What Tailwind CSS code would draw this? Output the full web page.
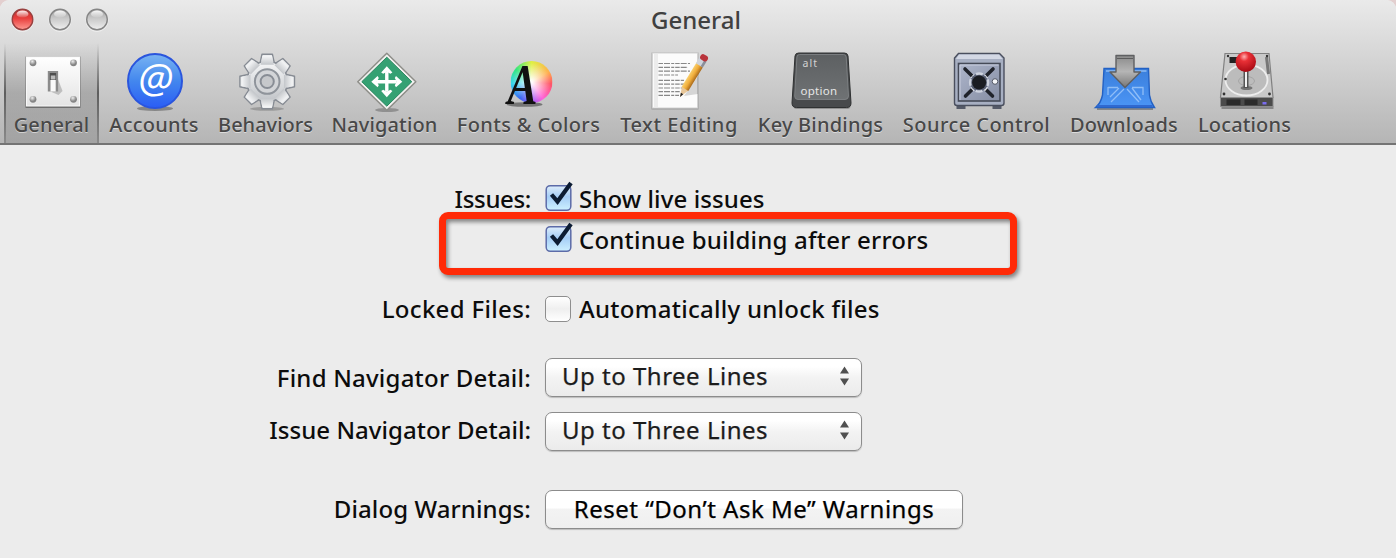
<!DOCTYPE html>
<html lang="en">
<head>
<meta charset="utf-8">
<title>General</title>
<script src="https://cdn.jsdelivr.net/npm/@tailwindcss/browser@4"></script>
</head>
<body class="bg-[#e3cfcf] font-['Noto_Sans',sans-serif] overflow-hidden">
<div class="w-[1396px] h-[558px] bg-[#ececec] rounded-t-[9px] overflow-hidden flex flex-col">
  <header class="h-[145px] shrink-0 flex flex-col bg-linear-to-b from-[#eaeaea] via-[#d0d0d0] to-[#b5b5b5] border-b-2 border-[#747474] rounded-t-[9px]">
    <!-- title bar -->
    <div class="h-[43px] shrink-0 grid grid-cols-[1fr_auto_1fr] items-start">
      <svg class="mt-[7px] ml-[10px]" width="100" height="26" viewBox="10 7 100 26">
        <defs>
          <linearGradient id="red" x1="0" y1="0" x2="0" y2="1"><stop offset="0" stop-color="#c02c2c"/><stop offset=".45" stop-color="#e8403e"/><stop offset="1" stop-color="#ff9c94"/></linearGradient>
          <linearGradient id="gry" x1="0" y1="0" x2="0" y2="1"><stop offset="0" stop-color="#a2a2a2"/><stop offset=".45" stop-color="#c9c9c9"/><stop offset="1" stop-color="#f0f0f0"/></linearGradient>
          <linearGradient id="gloss" x1="0" y1="0" x2="0" y2="1"><stop offset="0" stop-color="#fff" stop-opacity=".95"/><stop offset="1" stop-color="#fff" stop-opacity=".1"/></linearGradient>
        </defs>
        <circle cx="22.5" cy="20.5" r="11" fill="none" stroke="#fff" stroke-opacity=".5"/>
        <circle cx="60" cy="20.5" r="11" fill="none" stroke="#fff" stroke-opacity=".5"/>
        <circle cx="97" cy="20.5" r="11" fill="none" stroke="#fff" stroke-opacity=".5"/>
        <circle cx="22.5" cy="19.5" r="10.3" fill="url(#red)" stroke="#98403f" stroke-width="1.4"/>
        <circle cx="60" cy="19.5" r="10.3" fill="url(#gry)" stroke="#858585" stroke-width="1.4"/>
        <circle cx="97" cy="19.5" r="10.3" fill="url(#gry)" stroke="#858585" stroke-width="1.4"/>
        <ellipse cx="22.5" cy="14" rx="6" ry="3.6" fill="url(#gloss)"/>
        <ellipse cx="60" cy="14" rx="6" ry="3.6" fill="url(#gloss)"/>
        <ellipse cx="97" cy="14" rx="6" ry="3.6" fill="url(#gloss)"/>
      </svg>
      <h1 class="text-[24px] leading-[32px] mt-[4px] mr-[4px] text-[#404040] font-medium">General</h1>
      <span></span>
    </div>
    <!-- toolbar -->
    <nav class="flex h-[100px] pl-1 text-[20px] leading-[24px] font-medium text-[#484848] [text-shadow:0_1px_0_rgba(255,255,255,.5)] [&>div]:flex [&>div]:flex-col [&>div]:items-center [&>div]:pt-[7px] [&>div]:shrink-0 [&_span]:whitespace-nowrap [&_svg]:shrink-0 [&_span]:-mt-px">
      <div class="w-[95px] bg-linear-to-b from-black/0 via-black/15 to-black/10 relative">
        <i class="absolute left-0 inset-y-0 w-[2px] bg-linear-to-b from-black/0 via-black/45 to-black/15"></i>
        <i class="absolute right-0 inset-y-0 w-[2px] bg-linear-to-b from-black/0 via-black/45 to-black/15"></i>
        <svg width="64" height="64" viewBox="19.5 50 64 64">
          <defs><linearGradient id="plate" x1="0" y1="0" x2="0" y2="1"><stop offset="0" stop-color="#fff"/><stop offset="1" stop-color="#e4e4e4"/></linearGradient>
          <radialGradient id="screw" cx=".4" cy=".3"><stop offset="0" stop-color="#eee"/><stop offset="1" stop-color="#858585"/></radialGradient></defs>
          <rect x="25" y="56.5" width="55" height="51.5" fill="#000" fill-opacity=".35"/>
          <rect x="26" y="57" width="53" height="49" fill="url(#plate)" stroke="#f8f8f8"/>
          <g fill="url(#screw)"><circle cx="32.5" cy="62.8" r="3.4"/><circle cx="73" cy="62.8" r="3.4"/><circle cx="32.5" cy="99.3" r="3.4"/><circle cx="73" cy="99.3" r="3.4"/></g>
          <path d="M57 78l5 13-4 4-7-3z" fill="#999" fill-opacity=".55"/>
          <rect x="47.3" y="71" width="10.3" height="20.5" fill="#8b8b8b"/>
          <rect x="49.3" y="73" width="6.3" height="7" fill="#4e4e4e"/>
          <rect x="50.3" y="75.5" width="4.6" height="4" fill="#bbb"/>
          <rect x="50" y="80" width="5.2" height="11.5" fill="#fafafa"/>
        </svg>
        <span class="tracking-[0.1px]">General</span>
      </div>
      <div class="w-[110px]">
        <svg width="64" height="64" viewBox="122 50 64 64">
          <defs><linearGradient id="acc" x1="0" y1="0" x2="0" y2="1"><stop offset="0" stop-color="#79b4f2"/><stop offset=".5" stop-color="#4387ee"/><stop offset="1" stop-color="#2a5df5"/></linearGradient></defs>
          <ellipse cx="155" cy="108.5" rx="18" ry="2.5" fill="#000" fill-opacity=".3"/>
          <circle cx="155" cy="81" r="27" fill="url(#acc)" stroke="#2a55dd" stroke-width="2"/>
          <text x="155.5" y="93" text-anchor="middle" font-family="Open Sans" font-weight="400" font-size="41" fill="#fff" font-style="italic" style="text-shadow:none">@</text>
        </svg>
        <span class="tracking-[0.25px]">Accounts</span>
      </div>
      <div class="w-[113px]">
        <svg width="64" height="64" viewBox="233.5 50 64 64">
          <defs><linearGradient id="gear" x1="0" y1="0" x2="0" y2="1"><stop offset="0" stop-color="#f4f5f6"/><stop offset="1" stop-color="#c3c6ca"/></linearGradient>
          <path id="tooth" d="M-7.2-18L-5.2-27.3H5.2L7.2-18z"/></defs>
          <ellipse cx="266.5" cy="108.8" rx="17" ry="2" fill="#000" fill-opacity=".2"/>
          <g transform="translate(266.7 81.5)" stroke="#868b93" stroke-width="1.4" stroke-linejoin="round">
            <g fill="url(#gear)"><use href="#tooth"/><use href="#tooth" transform="rotate(45)"/><use href="#tooth" transform="rotate(90)"/><use href="#tooth" transform="rotate(135)"/><use href="#tooth" transform="rotate(180)"/><use href="#tooth" transform="rotate(225)"/><use href="#tooth" transform="rotate(270)"/><use href="#tooth" transform="rotate(315)"/></g>
            <circle r="20.3" fill="url(#gear)"/>
            <circle r="18.6" fill="url(#gear)" stroke="none"/>
            <g fill="url(#gear)" stroke="none" transform="scale(.93)"><use href="#tooth"/><use href="#tooth" transform="rotate(90)"/><use href="#tooth" transform="rotate(180)"/><use href="#tooth" transform="rotate(270)"/><use href="#tooth" transform="rotate(45)"/><use href="#tooth" transform="rotate(135)"/><use href="#tooth" transform="rotate(225)"/><use href="#tooth" transform="rotate(315)"/></g>
            <circle r="12.3" fill="#d3d5d8" stroke-width="2" stroke="#8f949b"/>
            <circle r="6.6" fill="#c6c8cb" stroke="#888d95" stroke-width="2"/>
          </g>
        </svg>
        <span>Behaviors</span>
      </div>
      <div class="w-[125px]">
        <svg width="64" height="64" viewBox="352.5 50 64 64">
          <ellipse cx="386.5" cy="110" rx="12" ry="2" fill="#000" fill-opacity=".25"/>
          <g transform="translate(386.3 81.7)">
            <path d="M0-28.5L29 0 0 28.5-29 0z" fill="#f3f3f1" stroke="#8d8d88" stroke-width="1.5" stroke-linejoin="round"/>
            <path d="M0-24.5L25 0 0 24.5-25 0z" fill="#35a173" stroke="#2b8961"/>
            <g fill="#fff"><path d="M-1.7-10h3.4v20h-3.4zM-10-1.7h20v3.4h-20z"/><path id="ah" d="M0-15.5L5.6-9.2 3.6-8 0-10-3.6-8-5.6-9.2z"/><use href="#ah" transform="rotate(90)"/><use href="#ah" transform="rotate(180)"/><use href="#ah" transform="rotate(270)"/></g>
          </g>
        </svg>
        <span class="tracking-[0.15px]">Navigation</span>
      </div>
      <div class="w-[163px]">
        <svg width="64" height="64" viewBox="496.5 50 64 64">
          <ellipse cx="524" cy="104.5" rx="18" ry="2.3" fill="#000" fill-opacity=".4"/>
          <foreignObject x="509.5" y="60.5" width="43" height="43"><div class="size-[42px] rounded-full bg-[radial-gradient(circle,#fff_2%,rgba(255,255,255,.4)_40%,transparent_65%),conic-gradient(#dff043,#ffb04e_60deg,#ff5566_95deg,#ff63d8_145deg,#9b62ff_180deg,#3a68f0_215deg,#35d6f0_265deg,#35e67c_310deg,#dff043)]"></div></foreignObject>
          <text x="507" y="103.5" font-family="Liberation Serif" font-weight="bold" font-style="italic" font-size="56" fill="#111" textLength="30" lengthAdjust="spacingAndGlyphs" style="text-shadow:none">A</text>
        </svg>
        <span class="tracking-[0.35px]">Fonts &amp; Colors</span>
      </div>
      <div class="w-[138px]">
        <svg width="64" height="64" viewBox="647 50 64 64">
          <defs><linearGradient id="pen" x1="0" y1="0" x2="1" y2="0"><stop offset="0" stop-color="#f9cf6c"/><stop offset=".5" stop-color="#f0ac3a"/><stop offset="1" stop-color="#a8691b"/></linearGradient></defs>
          <rect x="651.5" y="52.5" width="47" height="57" fill="#000" fill-opacity=".2"/>
          <rect x="652.5" y="53" width="45" height="55" fill="#fbfbfb" stroke="#d2d2d2"/>
          <path d="M656 54v53" stroke="#ececec" stroke-width="4"/>
          <g stroke="#888" stroke-width="1.2" stroke-dasharray="4.5 1 6 1.2 3 1"><path d="M658.5 63.5H690M658.5 67.3H688M658.5 71.2H690M658.5 75H678M658.5 80.3H684M658.5 84.2H690M658.5 88H683M658.5 91.7H680M658.5 95.3H679"/></g>
          <path d="M684 96l14-20v18z" fill="#000" fill-opacity=".15"/>
          <g transform="translate(680 97) rotate(31.5)">
            <path d="M0 0L-3.8-10H3.8z" fill="#e8c79a"/><path d="M0 0L-1.4-4H1.4z" fill="#222"/>
            <rect x="-3.9" y="-38" width="7.8" height="28.5" fill="url(#pen)"/>
            <rect x="-4.1" y="-44" width="8.2" height="7" fill="#d0d4dc"/><rect x="1.5" y="-44" width="2.6" height="7" fill="#8a8f9a"/>
            <rect x="-4.1" y="-49" width="8.2" height="6" rx="3" fill="#b9343c"/>
          </g>
        </svg>
        <span class="tracking-[0.5px]">Text Editing</span>
      </div>
      <div class="w-[145px]">
        <svg width="64" height="64" viewBox="788.5 50 64 64">
          <defs><linearGradient id="key" x1="0" y1="0" x2="0" y2="1"><stop offset="0" stop-color="#5d6062"/><stop offset="1" stop-color="#6f7274"/></linearGradient></defs>
          <rect x="793" y="102" width="57" height="7" rx="3" fill="#000" fill-opacity=".25"/>
          <path d="M798 53H844Q847 53 847.5 56L850.5 103Q850.5 107.5 846 107.5H796Q791.5 107.5 791.5 103L794.5 56Q795 53 798 53z" fill="#484a4c" stroke="#2f3132"/>
          <path d="M799 54.5H843Q845.5 54.5 845.7 57L848 96Q848 99.5 844.5 99.5H797.5Q794 99.5 794.2 96L796.4 57Q796.6 54.5 799 54.5z" fill="url(#key)" stroke="#7f8284" stroke-width=".9"/>
          <text x="802" y="67" font-family="Noto Sans" font-weight="400" font-size="10.5" fill="#d2d2d2" textLength="14.5" style="text-shadow:none">alt</text>
          <text x="800" y="94.5" font-family="Noto Sans" font-weight="400" font-size="11.5" fill="#e6e6e6" textLength="36.5" style="text-shadow:none">option</text>
        </svg>
        <span class="tracking-[0.2px]">Key Bindings</span>
      </div>
      <div class="w-[167px]">
        <svg width="64" height="64" viewBox="944.5 50 64 64">
          <defs><linearGradient id="safe" x1="0" y1="0" x2="1" y2="1"><stop offset="0" stop-color="#aeb6cb"/><stop offset="1" stop-color="#858da3"/></linearGradient></defs>
          <path d="M956 104h9v5h-9zM992 104h9v5h-9z" fill="#555a68"/>
          <path d="M958 53.5H999L1003.5 58V103Q1003.5 105.5 1001 105.5H956.5Q954 105.5 954 103V58z" fill="#a7afc2" stroke="#4a4f5e" stroke-width="1.4"/>
          <path d="M958.5 54.5H998.5L1002 59H955.5z" fill="#d3d8e4"/>
          <rect x="958" y="63.5" width="41.5" height="37.5" fill="url(#safe)" stroke="#454a57" stroke-width="1.6"/>
          <path d="M959.5 100V65H998" fill="none" stroke="#c9cede" stroke-width="1"/>
          <path d="M964.5 69L992 96M992.5 69L965 96" stroke="#20232b" stroke-width="3.6" stroke-linecap="round"/>
          <path d="M971.5 76L986 89.500M986 76L971.500 89.500" stroke="#e0e3ea" stroke-width="4.500"/>
          <circle cx="978.6" cy="82.5" r="9" fill="#596075" stroke="#cdd2de" stroke-width="2.4" stroke-dasharray="7 7.137" stroke-dashoffset="3.5"/>
          <circle cx="978.6" cy="82.5" r="7" fill="#1b1d23"/>
          <circle cx="994.5" cy="81.5" r="2.8" fill="#f4f5f8" stroke="#555a68"/>
        </svg>
        <span class="tracking-[0.45px]">Source Control</span>
      </div>
      <div class="w-[128px]">
        <svg width="64" height="64" viewBox="1092 50 64 64">
          <defs><linearGradient id="bp" x1="0" y1="0" x2="0" y2="1"><stop offset="0" stop-color="#3b7fdc"/><stop offset="1" stop-color="#4b95f5"/></linearGradient>
          <linearGradient id="arr" x1="0" y1="0" x2="0" y2="1"><stop offset="0" stop-color="#8a8a8a"/><stop offset=".5" stop-color="#b5b5b5"/><stop offset="1" stop-color="#777"/></linearGradient></defs>
          <path d="M1097 109H1153" stroke="#000" stroke-opacity=".3" stroke-width="2"/>
          <path d="M1104 68.5H1148.5L1149.5 95Q1150.5 102 1154.5 107.5H1095.5Q1101 103 1102.5 95z" fill="url(#bp)" stroke="#2361c4" stroke-width="1.4"/>
          <path d="M1106 71H1146.5M1108 87.500H1118M1132 87.500H1143V95M1108 87V95M1124 89L1111 102M1127 89L1139 102M1119 88L1110 97M1132 88L1141 100" fill="none" stroke="#a8cdfb" stroke-width="1.3" stroke-opacity=".75"/>
          <path d="M1097 106H1152.5" stroke="#3069cf" stroke-width="2"/>
          <path d="M1116 55.5H1134V72H1140.5L1125 87.5 1110 72H1116z" fill="url(#arr)" stroke="#5f6062" stroke-width="1.4" stroke-linejoin="round"/>
          <path d="M1117 58.5H1133" stroke="#5c5c5c"/>
        </svg>
        <span class="tracking-[0.2px]">Downloads</span>
      </div>
      <div class="w-[113px]">
        <svg width="64" height="64" viewBox="1212.5 50 64 64">
          <defs><radialGradient id="ball" cx=".42" cy=".25" r=".75"><stop offset="0" stop-color="#ffb0b0"/><stop offset=".3" stop-color="#e93036"/><stop offset="1" stop-color="#a80a14"/></radialGradient></defs>
          <path d="M1221 106H1273V109H1221z" fill="#000" fill-opacity=".3"/>
          <path d="M1224.5 53.5H1268.5L1272.5 97.5H1220z" fill="#c9c9c9" stroke="#818181" stroke-width="1.2"/>
          <path d="M1220 97.5H1272.5V106.5H1220z" fill="#4b4b4b" stroke="#8d8d8d"/>
          <path d="M1226 99.5H1240V105H1226zM1244 99.5H1257V105H1244z" fill="#2b2b2b"/><path d="M1262 102h4v2.5h-4z" fill="#7a6cf0"/>
          <ellipse cx="1246" cy="80" rx="21" ry="15.5" fill="#bcbcbc" stroke="#ededed" stroke-width="1.8"/>
          <ellipse cx="1246" cy="81" rx="8" ry="4.5" fill="none" stroke="#a5a5a5"/>
          <rect x="1229" y="57" width="9" height="6" fill="#222"/><path d="M1266 57L1268 74" stroke="#777" stroke-width="3"/>
          <g fill="#333"><circle cx="1227.5" cy="56" r="1.2"/><circle cx="1266.5" cy="56" r="1.2"/><circle cx="1223.5" cy="94" r="1.4"/><circle cx="1269" cy="94" r="1.4"/><circle cx="1225" cy="79" r="1.3"/></g>
          <ellipse cx="1246" cy="88" rx="6" ry="2" fill="#444" fill-opacity=".6"/>
          <rect x="1243" y="70" width="5" height="18" fill="#545454"/><rect x="1244.5" y="70" width="2" height="17" fill="#f2f2f2"/>
          <circle cx="1245.3" cy="61.8" r="10.2" fill="url(#ball)"/>
        </svg>
        <span class="tracking-[0.15px]">Locations</span>
      </div>
    </nav>
  </header>
  <!-- preferences form -->
  <svg width="0" height="0" class="absolute"><defs>
    <linearGradient id="cb" x1="0" y1="0" x2="0" y2="1"><stop offset="0" stop-color="#dfeefb"/><stop offset=".45" stop-color="#a5cdf6"/><stop offset="1" stop-color="#cdf0ff"/></linearGradient>
    <symbol id="check" viewBox="0 0 30 34"><rect x="1.2" y="6.7" width="24.6" height="24.6" rx="4" fill="url(#cb)" stroke="#5c6ba8" stroke-width="1.5"/><path d="M6.500 15.500L12.500 22.500 26 4" fill="none" stroke="#0c1c33" stroke-width="4.200"/></symbol>
  </defs></svg>
  <main class="relative flex-1 text-[24px] leading-[32px] text-[#0c0c0c] font-medium tracking-[0.32px]">
    <div class="absolute left-[439px] top-[67px] w-[578px] h-[63px] border-[7px] border-[#ff2a07] rounded-[9px] drop-shadow-[2px_3px_2px_rgba(0,0,0,.45)]"></div>
    <div class="relative pt-[38px] grid grid-cols-[531px_1fr] gap-x-[14px] [&>label]:text-right">
      <label class="h-[41px] tracking-[-0.35px]">Issues:</label>
      <div class="h-[41px] flex gap-[4px] tracking-[0.1px]"><svg width="30" height="34" class="-mt-[4px]"><use href="#check"/></svg>Show live issues</div>
      <label class="h-[69px]"></label>
      <div class="h-[69px] flex gap-[4px] tracking-[0.22px]"><svg width="30" height="34" class="-mt-[4px]"><use href="#check"/></svg>Continue building after errors</div>
      <label class="h-[65px]">Locked Files:</label>
      <div class="h-[65px] flex gap-[8px] tracking-[0.27px]"><i class="mt-[3px] size-[26px] rounded-[5px] border-[1.5px] border-[#8e8e8e] bg-linear-to-b from-white via-[#efefef] to-white"></i>Automatically unlock files</div>
      <label class="h-[54px] pt-[4px] tracking-[0.22px]">Find Navigator Detail:</label>
      <div class="h-[54px]"><div class="w-[317px] h-[39px] rounded-[7px] border border-[#8c8c8c] bg-linear-to-b from-white from-20% via-[#f3f3f3] via-50% to-[#ebebeb] shadow-[0_1px_1px_rgba(0,0,0,.2)] flex items-center justify-between pl-[16px] pr-[11px] pb-[3px] font-normal tracking-[0.5px] text-[#1c1c1c] [-webkit-text-stroke:0.25px_#1c1c1c]">Up to Three Lines<svg width="11" height="20" viewBox="0 0 11 20" fill="#505050"><path d="M5.5 .5L10 7.500H1zM5.5 19.500L1 12.500H10z"/></svg></div></div>
      <label class="h-[78px] pt-[2px] tracking-[0.03px]">Issue Navigator Detail:</label>
      <div class="h-[78px]"><div class="w-[317px] h-[39px] rounded-[7px] border border-[#8c8c8c] bg-linear-to-b from-white from-20% via-[#f3f3f3] via-50% to-[#ebebeb] shadow-[0_1px_1px_rgba(0,0,0,.2)] flex items-center justify-between pl-[16px] pr-[11px] pb-[3px] font-normal tracking-[0.5px] text-[#1c1c1c] [-webkit-text-stroke:0.25px_#1c1c1c]">Up to Three Lines<svg width="11" height="20" viewBox="0 0 11 20" fill="#505050"><path d="M5.5 .5L10 7.500H1zM5.5 19.500L1 12.500H10z"/></svg></div></div>
      <label class="pt-[3px] tracking-[0.1px]">Dialog Warnings:</label>
      <div><button class="w-[418px] h-[39px] rounded-[7px] border border-[#8c8c8c] bg-linear-to-b from-white from-45% via-[#f3f3f3] via-50% to-[#efefef] shadow-[0_1px_1px_rgba(0,0,0,.2)] flex items-center justify-center pb-[2px] font-normal tracking-[0.5px] text-black whitespace-nowrap [-webkit-text-stroke:0.25px_black]">Reset “Don’t Ask Me” Warnings</button></div>
    </div>
  </main>
</div>
</body>
</html>
